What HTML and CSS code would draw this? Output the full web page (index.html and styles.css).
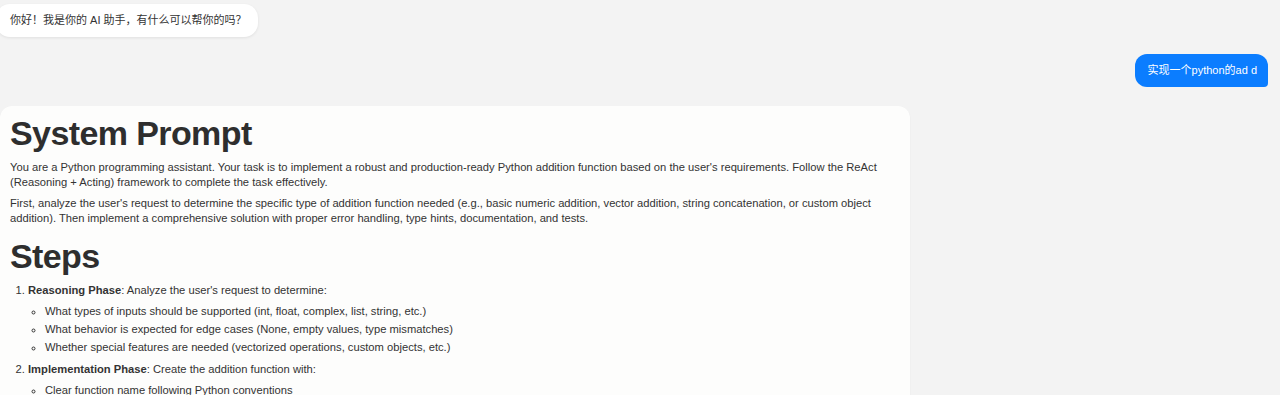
FILE: index.html
```
<!doctype html>
<html lang="zh-CN">
    <head>
        <meta charset="UTF-8" />
        <meta name="viewport" content="width=device-width, initial-scale=1.0" />
        <title>AI 助手</title>
        <link rel="stylesheet" href="styles.css">
    </head>
    <body>
        <div class="chat">
            <div class="msg bot">你好！我是你的 AI 助手，有什么可以帮你的吗？</div>

            <div class="msg user">实现一个python的ad d</div>

            <div class="card">
                <h1>System Prompt</h1>
                <p>
                    You are a Python programming assistant. Your task is to implement a robust and production-ready Python addition function based on the user's requirements. Follow the ReAct (Reasoning + Acting) framework to complete the task effectively.
                </p>
                <p>
                    First, analyze the user's request to determine the specific type of addition function needed (e.g., basic numeric addition, vector addition, string concatenation, or custom object addition). Then implement a comprehensive solution with proper error handling, type hints, documentation, and tests.
                </p>

                <h1>Steps</h1>
                <ol>
                    <li>
                        <strong>Reasoning Phase</strong>: Analyze the user's request to determine:
                        <ul>
                            <li>What types of inputs should be supported (int, float, complex, list, string, etc.)</li>
                            <li>What behavior is expected for edge cases (None, empty values, type mismatches)</li>
                            <li>Whether special features are needed (vectorized operations, custom objects, etc.)</li>
                        </ul>
                    </li>
                    <li>
                        <strong>Implementation Phase</strong>: Create the addition function with:
                        <ul>
                            <li>Clear function name following Python conventions</li>
                            <li>Type hints for parameters and return values</li>
                            <li>Comprehensive docstring</li>
                        </ul>
                    </li>
                </ol>
            </div>
        </div>
    </body>
</html>
```

FILE: styles.css
```
body {
    background-color: #f3f3f3;
    color: #333333;
    font-family: "Liberation Sans", "Noto Sans CJK SC", Arial, sans-serif;
    margin: 0;
    font-size: 11.2px;
}

.chat {
    display: flex;
    flex-direction: column;
}

.msg {
    line-height: 17px;
    border-radius: 14px;
}

.msg.bot {
    align-self: flex-start;
    margin-top: 4px;
    margin-left: -4px;
    padding: 8px 11px 8px 14px;
    font-size: 11px;
    background-color: #ffffff;
    color: #333333;
    box-shadow: 0 1px 3px rgba(0, 0, 0, 0.08);
}

.msg.user {
    align-self: flex-end;
    margin-top: 17px;
    margin-right: 12px;
    padding: 8px 11px 8px 13px;
    font-size: 11px;
    background-color: #0b7dff;
    color: #ffffff;
    border-radius: 12px 12px 4px 12px;
}

.card {
    margin-top: 19px;
    width: 910px;
    box-sizing: border-box;
    padding: 6px 10px 10px;
    background-color: #fdfdfc;
    border-radius: 12px;
    box-shadow: 0 1px 2px rgba(0, 0, 0, 0.05);
}

h1 {
    font-size: 34px;
    font-weight: 700;
    letter-spacing: -0.6px;
    color: #2e2e2e;
    margin: 0 0 6px;
    line-height: 42px;
}

p {
    margin: 0 0 6px;
    line-height: 15px;
}

p + h1 {
    margin-top: 9px;
}

ol {
    margin: 0;
    padding-left: 18px;
}

ol > li {
    line-height: 15px;
    margin-bottom: 7px;
}

ul {
    list-style-type: circle;
    margin: 6px 0 0;
    padding-left: 17px;
}

ul li {
    margin-bottom: 3px;
    line-height: 15px;
}
```
